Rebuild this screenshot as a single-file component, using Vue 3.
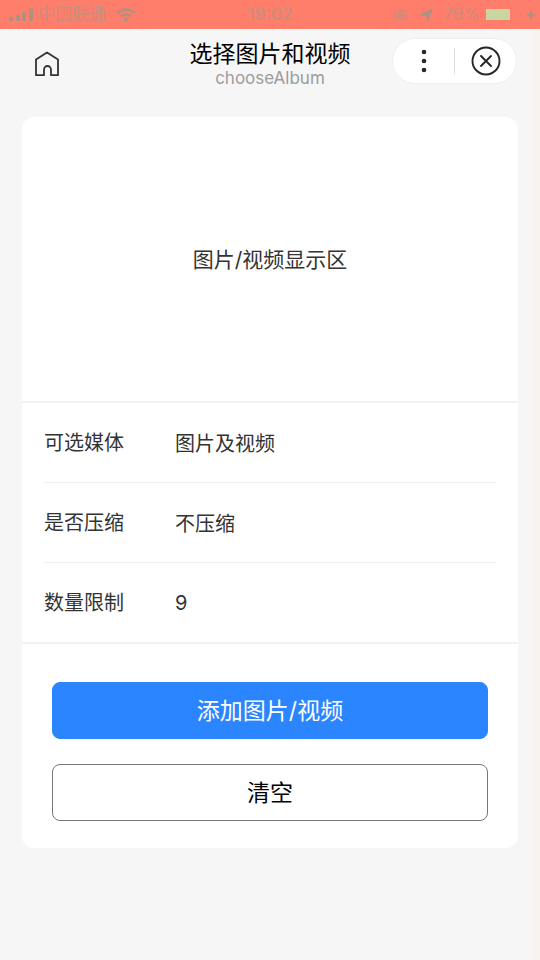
<script setup>
const options = [
  { label: '可选媒体', value: '图片及视频' },
  { label: '是否压缩', value: '不压缩' },
  { label: '数量限制', value: '9' },
]
</script>

<template>
  <div class="page">
    <div class="status">
      <div class="status-side">
        <svg class="signal" width="26" height="14" viewBox="0 0 26 14" fill="currentColor">
          <circle cx="3" cy="11" r="2.4" />
          <rect x="8" y="7" width="4" height="6" rx="1" />
          <rect x="14" y="4" width="4" height="9" rx="1" />
          <rect x="21" y="0" width="4" height="13" rx="1" />
        </svg>
        <span class="carrier">中国联通</span>
        <svg class="signal wifi" width="20" height="14" viewBox="0 0 20 14" fill="none" stroke="currentColor" stroke-width="2.4">
          <path d="M1 5Q10-2 19 5M5 8.500Q10 4 15 8.500" />
          <circle cx="10" cy="11.500" r="1" fill="currentColor" />
        </svg>
      </div>
      <span class="time">19:02</span>
      <div class="status-side end">
        <svg width="16" height="16" viewBox="0 0 16 16" fill="none" stroke="currentColor" stroke-width="1.300">
          <path d="M3 13A6.500 6.500 0 1 1 13 13" />
          <path d="M5.500 7.500h5v3.500h-5z" fill="currentColor" />
          <path d="M6.500 7V5.500a1.500 1.500 0 0 1 3 0V7" />
        </svg>
        <svg class="signal" width="14" height="14" viewBox="0 0 14 14" fill="currentColor">
          <path d="M14 0L9 14 7 8 0 7z" />
        </svg>
        <span class="percent">79%</span>
        <span class="battery"></span>
        <svg class="signal" width="18" height="12" viewBox="0 0 18 12" fill="currentColor">
          <path d="M1 4q3 2 0 4z" opacity="0.5" />
          <path d="M11 1l1.500 3.500L16 6l-3.500 1.500L11 11 9.500 7.500 6 6l3.500-1.500z" />
        </svg>
      </div>
    </div>

    <header class="header">
      <button class="home" type="button" aria-label="首页">
        <svg width="26" height="26" viewBox="0 0 26 26" fill="none" stroke="#333" stroke-width="1.800" stroke-linejoin="round">
          <path d="M2 8.500L13 1.500L24 8.500V24.200H17V18.500a3.500 3.500 0 0 0-7 0V24.200H2z" />
        </svg>
      </button>
      <div class="heading">
        <h1>选择图片和视频</h1>
        <p>chooseAlbum</p>
      </div>
      <div class="capsule">
        <button type="button" aria-label="更多">
          <svg width="6" height="24" viewBox="0 0 6 24" fill="#262626">
            <circle cx="3" cy="3" r="2.300" />
            <circle cx="3" cy="12" r="2.300" />
            <circle cx="3" cy="21" r="2.300" />
          </svg>
        </button>
        <span class="divider"></span>
        <button type="button" aria-label="关闭">
          <svg width="30" height="30" viewBox="0 0 30 30" fill="none" stroke="#262626" stroke-width="1.900" stroke-linecap="round">
            <circle cx="15" cy="15" r="13.500" />
            <path d="M10 10l10 10M20 10L10 20" />
          </svg>
        </button>
      </div>
    </header>

    <main class="card">
      <section class="display">图片/视频显示区</section>
      <dl class="options">
        <div v-for="option in options" :key="option.label" class="row">
          <dt>{{ option.label }}</dt>
          <dd>{{ option.value }}</dd>
        </div>
      </dl>
      <div class="actions">
        <button class="action primary" type="button">添加图片/视频</button>
        <button class="action" type="button">清空</button>
      </div>
    </main>
  </div>
</template>

<style>
body {
  background: #f6f6f6;
}
</style>

<style scoped>
.page {
  min-height: 100vh;
  font-family: Inter, "Noto Sans CJK SC", sans-serif;
  color: #333;
  background: linear-gradient(to left, #f8f4ed 7px, #f6f6f6 7px);
}

button {
  margin: 0;
  padding: 0;
  border: 0;
  background: none;
  font: inherit;
  color: inherit;
}

svg {
  display: block;
}

.status {
  display: grid;
  grid-template-columns: 1fr auto 1fr;
  align-items: center;
  height: 29px;
  padding: 0 8px;
  box-sizing: border-box;
  background: #ff7d6b;
  color: #cc8d7a;
  font-size: 17px;
  line-height: 29px;
}

.status-side {
  display: flex;
  align-items: center;
  gap: 4px;
}

.signal {
  color: #b0917f;
}

.wifi {
  margin-left: 6px;
}

.time {
  font-weight: 600;
}

.end {
  justify-content: flex-end;
  gap: 10px;
}

.end .percent {
  margin-right: -4px;
}

.battery {
  width: 24px;
  height: 11px;
  background: #c9d69f;
}

.end svg:last-child {
  margin-right: -6px;
}

.header {
  display: grid;
  grid-template-columns: 1fr auto 1fr;
  align-items: start;
  padding: 9px 23px 30px;
}

.home {
  justify-self: start;
  margin: 13px 0 0 11px;
}

.heading {
  text-align: center;
}

.heading h1 {
  margin: 0;
  font-size: 23px;
  line-height: 32px;
  font-weight: 400;
  color: #000;
}

.heading p {
  margin: 0;
  font-size: 17px;
  line-height: 17px;
  color: #9c9c9c;
}

.capsule {
  display: grid;
  grid-template-columns: 1fr 1px 1fr;
  align-items: center;
  justify-self: end;
  width: 125px;
  height: 46px;
  box-sizing: border-box;
  border: 1px solid #eee;
  border-radius: 23px;
  background: #fff;
}

.capsule button {
  display: grid;
  place-items: center;
}

.divider {
  height: 26px;
  background: #dedede;
}

.card {
  margin: 0 22px;
  border-radius: 12px;
  background: #fff;
}

.display {
  display: grid;
  place-items: center;
  height: 284px;
  padding-bottom: 2px;
  box-sizing: border-box;
  font-size: 21px;
}

.options {
  margin: 0;
  padding: 0 22px;
  border-top: 2px solid #f2f2f2;
  border-bottom: 2px solid #f2f2f2;
}

.row {
  display: flex;
  align-items: center;
  height: 79px;
  font-size: 20px;
  border-top: 1px solid #f0f0f0;
}

.row:first-child {
  border-top: 0;
}

dt {
  width: 131px;
  padding-bottom: 3px;
}

dd {
  margin: 0;
}

.actions {
  display: grid;
  gap: 25px;
  padding: 38px 30px 27px;
}

.action {
  height: 57px;
  padding-bottom: 4px;
  border: 1px solid #777;
  border-radius: 8px;
  font-size: 23px;
  color: #000;
}

.primary {
  border-color: #2b85ff;
  background: #2b85ff;
  color: #fff;
}
</style>
